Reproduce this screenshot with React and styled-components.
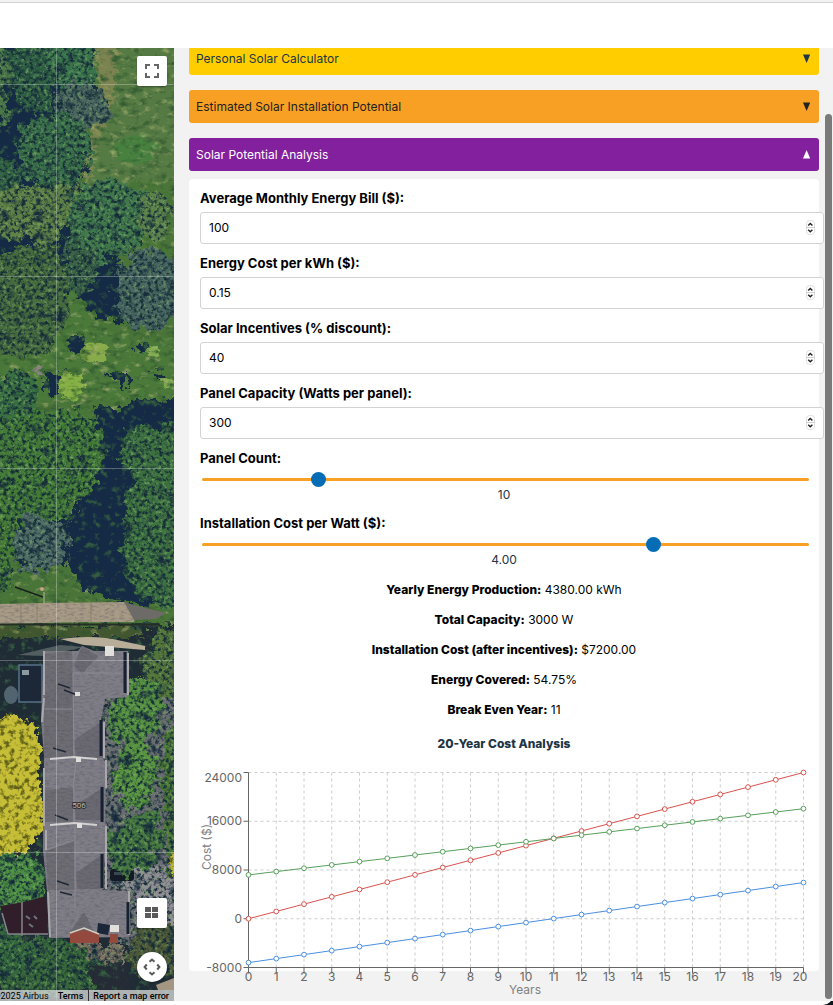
import React, { useState } from "react";
import styled, { createGlobalStyle } from "styled-components";

const GlobalStyle = createGlobalStyle`
  * { box-sizing: border-box; }
  html, body, #root { height: 100%; }
  body {
    margin: 0;
    overflow: hidden;
    background: #0b1418;
    color: #213547;
    font-family: Inter, "Liberation Sans", sans-serif;
    font-size: 12px;
    line-height: 18px;
  }
`;

const Page = styled.div`
  display: flex;
  flex-direction: column;
  height: 100%;
  padding-bottom: 4px;
  border-bottom-right-radius: 10px;
  background: #ffffff;
`;

const TopBar = styled.header`
  flex: 0 0 48px;
  background: #ffffff;
  border-top: 2px solid #f2f2f2;
  box-shadow: inset 0 1px 0 #d2d2d2;
`;

const Main = styled.main`
  position: relative;
  flex: 1;
  min-height: 0;
  display: grid;
  grid-template-columns: 174px minmax(0, 1fr);
`;

const MapPane = styled.section`
  position: relative;
  overflow: hidden;
  background: #3c6638;
`;

const Aerial = styled.svg`
  display: block;
  width: 100%;
  height: 100%;
`;

const MapControls = styled.div`
  position: absolute;
  inset: 8px 7px 19px auto;
  display: flex;
  flex-direction: column;
  justify-content: space-between;
`;

const ControlGroup = styled.div`
  display: flex;
  flex-direction: column;
  gap: 24px;
`;

const MapButton = styled.button`
  display: grid;
  place-items: center;
  width: 30px;
  height: 30px;
  padding: 0;
  border: 0;
  border-radius: ${(p) => (p.$round ? "50%" : "2px")};
  background: #ffffff;
  box-shadow: 0 1px 2px rgba(0, 0, 0, 0.3);
`;

const Attribution = styled.footer`
  position: absolute;
  right: 0;
  bottom: 0;
  display: flex;
  height: 11px;
  background: rgba(228, 230, 228, 0.72);
  font-family: Roboto, "Liberation Sans", sans-serif;
  font-size: 9px;
  line-height: 12px;
  white-space: nowrap;
  color: #000000;
`;

const Credit = styled.span`
  padding: 0 5px 0 4px;
`;

const CreditLink = styled.a`
  padding: 0 5px 0 4px;
  color: #000000;
  font-weight: 500;
  text-decoration: none;
  border-left: ${(p) => (p.$divided ? "1px solid #333333" : "0")};
`;

const Panel = styled.section`
  overflow: hidden;
  padding: 0 14px 0 15px;
  background: #f2f2f2;
`;

const Stack = styled.div`
  display: flex;
  flex-direction: column;
  gap: 15px;
  margin-top: -6px;
`;

const Section = styled.div`
  display: flex;
  flex-direction: column;
  gap: 8px;
`;

const SectionHeader = styled.button`
  display: flex;
  align-items: center;
  justify-content: space-between;
  height: 33px;
  padding: 0 9px 0 7px;
  border: 0;
  border-radius: 3px;
  background: ${(p) => p.$bg};
  color: ${(p) => p.$fg};
  font: inherit;
`;

const Card = styled.div`
  padding: 11px;
  border-radius: 4px;
  background: #ffffff;
`;

const Field = styled.div`
  display: flex;
  flex-direction: column;
  min-height: 54px;
  margin-bottom: 11px;
`;

const FieldLabel = styled.label`
  margin-bottom: 5px;
  font-size: 13px;
  line-height: 17px;
  font-weight: 700;
  color: #000000;
`;

const NumberBox = styled.div`
  position: relative;
  width: calc(100% + 16px);
`;

const NumberInput = styled.input`
  display: block;
  width: 100%;
  height: 32px;
  padding: 0 24px 2px 8px;
  border: 1px solid #d3d3d3;
  border-radius: 3px;
  outline: none;
  background: #ffffff;
  color: #000000;
  font: inherit;
  appearance: textfield;
  &::-webkit-inner-spin-button,
  &::-webkit-outer-spin-button {
    appearance: none;
    margin: 0;
  }
`;

const Stepper = styled.svg`
  position: absolute;
  top: 8px;
  right: 9px;
  pointer-events: none;
`;

const Slider = styled.input`
  appearance: none;
  height: 15px;
  margin: 0 0 0 2px;
  background: transparent;
  width: calc(100% - 1px);
  &::-webkit-slider-runnable-track {
    height: 3px;
    border-radius: 2px;
    background: #f8a023;
  }
  &::-webkit-slider-thumb {
    appearance: none;
    width: 15px;
    height: 15px;
    margin-top: -6px;
    border: 0;
    border-radius: 50%;
    background: #056db6;
  }
`;

const SliderValue = styled.output`
  line-height: 15px;
  text-align: center;
`;

const Results = styled.div`
  display: flex;
  flex-direction: column;
  align-items: center;
  gap: 12px;
  padding-top: 1px;
  color: #000000;
`;

const Result = styled.p`
  margin: 0;
  b { font-weight: 800; }
`;

const ChartTitle = styled.h3`
  margin: 16px 0 14px;
  font-size: 12px;
  font-weight: 800;
  line-height: 18px;
  text-align: center;
`;

const ChartFrame = styled.div`
  height: 193px;
`;

const ChartSvg = styled.svg`
  display: block;
  width: 100%;
  overflow: visible;
`;

const ScrollThumb = styled.div`
  position: absolute;
  top: 66px;
  right: 1px;
  bottom: 2px;
  width: 7px;
  border-radius: 4px;
  background: #7a7a7a;
`;

function Arrow({ open }) {
  return (
    <svg width="7" height="9" viewBox="0 0 7 9" fill="currentColor" aria-hidden="true">
      <path d={open ? "M0 8.5H7.2L3.6 0Z" : "M0 .5H7.2L3.6 9Z"} />
    </svg>
  );
}

function NumberField({ id, label, value, step }) {
  const [current, setCurrent] = useState(value);
  return (
    <Field>
      <FieldLabel htmlFor={id}>{label}</FieldLabel>
      <NumberBox>
        <NumberInput
          id={id}
          type="number"
          step={step}
          value={current}
          onChange={(e) => setCurrent(e.target.value)}
        />
        <Stepper width="9" height="15" viewBox="0 0 9 15" aria-hidden="true">
          <rect x=".5" y=".5" width="8" height="14" rx="3" fill="#fff" stroke="#dedede" />
          <path d="M0 7.5h9" stroke="#cfcfcf" />
          <path d="M2.2 5.4l2.1-2 2.1 2M2.2 9.8l2.1 2 2.1-2" fill="none" stroke="#222" strokeWidth="1.4" />
        </Stepper>
      </NumberBox>
    </Field>
  );
}

function RangeField({ id, label, value, min, max, step, digits }) {
  const [current, setCurrent] = useState(value);
  return (
    <Field>
      <FieldLabel htmlFor={id}>{label}</FieldLabel>
      <Slider
        id={id}
        type="range"
        min={min}
        max={max}
        step={step}
        value={current}
        onChange={(e) => setCurrent(Number(e.target.value))}
      />
      <SliderValue htmlFor={id}>{current.toFixed(digits)}</SliderValue>
    </Field>
  );
}

const YEARS = Array.from({ length: 21 }, (_, i) => i);
const TICKS = [24000, 16000, 8000, 0, -8000];
const SERIES = [
  { color: "#d9534f", at: (y) => 1200 * y },
  { color: "#4a8fe0", at: (y) => -7200 + 657 * y },
  { color: "#57a05b", at: (y) => 7200 + 543 * y },
];
const xOf = (year) => 48.5 + year * 27.75;
const yOf = (cost) => 5.5 + ((24000 - cost) / 32000) * 195;

function CostChart() {
  return (
    <ChartSvg viewBox="0 0 608 234" role="img" aria-label="20-year cost analysis">
      <g stroke="#cccccc" strokeDasharray="3 3">
        {TICKS.map((t) => (
          <line key={t} x1={xOf(0)} x2={xOf(20)} y1={yOf(t)} y2={yOf(t)} />
        ))}
        {YEARS.map((y) => (
          <line key={y} x1={xOf(y)} x2={xOf(y)} y1="5.5" y2="200.5" />
        ))}
      </g>
      <path d="M48.5 5.5V200.5H603.5" fill="none" stroke="#666666" />
      <g fill="#666666" fontSize="12">
        {TICKS.map((t) => (
          <React.Fragment key={t}>
            <path d={`M43.5 ${yOf(t)}h5`} stroke="#666666" />
            <text x="42" y={t === 24000 ? 15 : yOf(t) + 4} textAnchor="end">{t}</text>
          </React.Fragment>
        ))}
        {YEARS.map((y) => (
          <React.Fragment key={y}>
            <path d={`M${xOf(y)} 200.5v6`} stroke="#666666" />
            <text x={y === 20 ? 600 : xOf(y)} y="214" textAnchor="middle">{y}</text>
          </React.Fragment>
        ))}
      </g>
      <g fill="#808080" fontSize="12" textAnchor="middle">
        <text x="325" y="227">Years</text>
        <text transform="translate(11 80) rotate(-90)">Cost ($)</text>
      </g>
      {SERIES.map((s) => (
        <g key={s.color} stroke={s.color} fill="none">
          <polyline points={YEARS.map((y) => `${xOf(y)},${yOf(s.at(y))}`).join(" ")} />
          {YEARS.map((y) => (
            <circle key={y} cx={xOf(y)} cy={yOf(s.at(y))} r="2.4" fill="#ffffff" />
          ))}
        </g>
      ))}
    </ChartSvg>
  );
}

function AerialMap() {
  return (
    <Aerial viewBox="0 48 174 953" preserveAspectRatio="xMidYMid slice" role="img" aria-label="Satellite map">
      <defs>
        <filter id="foliage" x="-10%" y="-10%" width="120%" height="120%" colorInterpolationFilters="sRGB">
          <feTurbulence type="fractalNoise" baseFrequency=".27" numOctaves="3" seed="7" result="fine" />
          <feTurbulence type="fractalNoise" baseFrequency=".09" numOctaves="4" seed="21" result="broad" />
          <feDisplacementMap in="SourceGraphic" in2="broad" scale="24" xChannelSelector="R" yChannelSelector="G" result="d" />
          <feColorMatrix in="fine" values="0 0 0 0 .08  0 0 0 0 .17  0 0 0 0 .22  3.6 0 0 0 -1.65" result="k" />
          <feComposite in="k" in2="d" operator="in" result="dark" />
          <feColorMatrix in="broad" values="0 0 0 0 .08  0 0 0 0 .16  0 0 0 0 .24  0 0 4 0 -2.3" result="k2" />
          <feComposite in="k2" in2="d" operator="in" result="deep" />
          <feColorMatrix in="fine" values="0 0 0 0 .5  0 0 0 0 .68  0 0 0 0 .4  0 2.2 0 0 -1.15" result="w" />
          <feComposite in="w" in2="d" operator="in" result="light" />
          <feMerge result="all">
            <feMergeNode in="d" /><feMergeNode in="deep" /><feMergeNode in="light" /><feMergeNode in="dark" />
          </feMerge>
          <feGaussianBlur in="all" stdDeviation=".5" />
        </filter>
        <filter id="ground" x="-5%" y="-5%" width="110%" height="110%" colorInterpolationFilters="sRGB">
          <feTurbulence type="fractalNoise" baseFrequency=".1 .16" numOctaves="4" seed="12" result="n" />
          <feDisplacementMap in="SourceGraphic" in2="n" scale="16" xChannelSelector="R" yChannelSelector="G" result="d" />
          <feColorMatrix in="n" values="0 0 0 0 .66  0 0 0 0 .7  0 0 0 0 .45  0 2.4 0 0 -1.35" result="w" />
          <feComposite in="w" in2="d" operator="in" result="light" />
          <feColorMatrix in="n" values="0 0 0 0 .17  0 0 0 0 .33  0 0 0 0 .18  2.4 0 0 0 -1.2" result="k" />
          <feComposite in="k" in2="d" operator="in" result="dark" />
          <feMerge result="all"><feMergeNode in="d" /><feMergeNode in="dark" /><feMergeNode in="light" /></feMerge>
          <feGaussianBlur in="all" stdDeviation=".4" />
        </filter>
        <filter id="blossom" x="-10%" y="-10%" width="120%" height="120%" colorInterpolationFilters="sRGB">
          <feTurbulence type="fractalNoise" baseFrequency=".2" numOctaves="3" seed="9" result="n" />
          <feDisplacementMap in="SourceGraphic" in2="n" scale="14" xChannelSelector="R" yChannelSelector="G" result="d" />
          <feColorMatrix in="n" values="0 0 0 0 .38  0 0 0 0 .38  0 0 0 0 .1  4 0 0 0 -1.9" result="k" />
          <feComposite in="k" in2="d" operator="in" result="dark" />
          <feMerge result="all"><feMergeNode in="d" /><feMergeNode in="dark" /></feMerge>
          <feGaussianBlur in="all" stdDeviation=".5" />
        </filter>
        <filter id="shade" x="-10%" y="-10%" width="120%" height="120%" colorInterpolationFilters="sRGB">
          <feTurbulence type="fractalNoise" baseFrequency=".14" numOctaves="4" seed="3" result="n" />
          <feDisplacementMap in="SourceGraphic" in2="n" scale="20" xChannelSelector="R" yChannelSelector="G" result="d" />
          <feColorMatrix in="n" values="0 0 0 0 .2  0 0 0 0 .36  0 0 0 0 .25  0 4 0 0 -2.2" result="w" />
          <feComposite in="w" in2="d" operator="in" result="light" />
          <feMerge result="all"><feMergeNode in="d" /><feMergeNode in="light" /></feMerge>
          <feGaussianBlur in="all" stdDeviation=".6" />
        </filter>
        <filter id="shingle" x="0" y="0" width="100%" height="100%" colorInterpolationFilters="sRGB">
          <feTurbulence type="fractalNoise" baseFrequency=".2 .5" numOctaves="3" seed="5" result="n" />
          <feColorMatrix in="n" values="0 0 0 0 .3  0 0 0 0 .3  0 0 0 0 .36  .9 0 0 0 -.38" result="k" />
          <feComposite in="k" in2="SourceGraphic" operator="in" result="dark" />
          <feMerge><feMergeNode in="SourceGraphic" /><feMergeNode in="dark" /></feMerge>
        </filter>
      </defs>

      <g filter="url(#ground)">
        <rect x="-20" y="30" width="220" height="1000" fill="#4a7539" />
        <path d="M92 30H200V180H130L85 230 82 160 98 120 108 95Z" fill="#557a43" />
        <path d="M94 40L118 40 112 100 95 150 85 190 82 170 90 130 100 110Z" fill="#7b8350" />
        <ellipse cx="135" cy="150" rx="22" ry="14" fill="#47803f" />
        <path d="M0 250H70L90 320 130 340H174V400H0Z" fill="#4b793a" />
      </g>

      <g filter="url(#shade)" fill="#152a44">
        <path d="M-10 40H90L94 80 80 130 86 170 60 205 -10 210Z" />
        <path d="M-10 190L60 180 70 240 20 262 -10 262Z" />
        <path d="M50 225L84 215 120 262 128 325 100 318 70 290Z" />
        <path d="M68 336L84 338 84 355 66 350ZM137 344L151 346 149 355 136 351ZM44 372L64 372 64 397 44 390ZM108 374L129 374 126 391ZM149 372L166 373 164 382Z" />
        <path d="M95 404L118 410 130 400 190 400 190 604 135 606 82 590 62 550 80 490 102 460Z" />
        <path d="M12 490L70 520 64 566 20 566Z" />
        <path d="M-10 625H190V1010H-10Z" fill="#202c35" />
      </g>

      <g filter="url(#foliage)">
        <path d="M-20 40H4L14 62 6 100 12 120 -20 125Z" fill="#4a7648" />
        <path d="M6 46L44 40 58 70 50 110 20 112 12 80Z" fill="#2f6043" />
        <path d="M44 36H96L97 72 86 90 60 88 50 64Z" fill="#3a754b" />
        <ellipse cx="81" cy="107" rx="28" ry="24" fill="#4c6860" />
        <ellipse cx="54" cy="150" rx="38" ry="38" fill="#3a7049" />
        <ellipse cx="2" cy="182" rx="17" ry="26" fill="#336444" />
        <path d="M-20 196L60 180 86 182 82 205 58 237 44 247 24 240 -20 238Z" fill="#5f8145" />
        <path d="M84 182L110 178 140 192 144 235 134 252 110 256 100 266 76 256 66 222Z" fill="#40774b" />
        <ellipse cx="155" cy="213" rx="17" ry="24" fill="#5c824a" />
        <path d="M62 236L96 252 92 288 70 292Z" fill="#3a6246" />
        <ellipse cx="148" cy="290" rx="34" ry="40" fill="#4a6862" />
        <path d="M-20 252L50 244 68 270 70 310 48 354 -20 356Z" fill="#466b3d" />
        <ellipse cx="12" cy="402" rx="28" ry="31" fill="#3a7141" />
        <path d="M-20 430L30 412 74 408 100 424 104 466 84 494 66 518 22 522 -20 502Z" fill="#437b36" />
        <path d="M125 430L158 426 195 408 195 610 162 608 140 596 124 562 126 500 134 480 120 450Z" fill="#3d713f" />
        <ellipse cx="39" cy="544" rx="28" ry="27" fill="#506c66" />
        <path d="M-20 492L12 498 15 540 12 587 -20 594Z" fill="#457a34" />
      </g>
      <g filter="url(#ground)">
        <ellipse cx="94" cy="352" rx="12" ry="11" fill="#87ab49" />
        <ellipse cx="71" cy="386" rx="13" ry="13" fill="#86b144" />
        <ellipse cx="153" cy="352" rx="7" ry="6" fill="#84ad53" />
        <ellipse cx="167" cy="383" rx="7" ry="4" fill="#84ad53" />
        <ellipse cx="39" cy="371" rx="6" ry="5" fill="#87867d" />
        <path d="M-20 626H140V638H-20Z" fill="#42562f" />
      </g>
      <path d="M0 604L45 603 124 602 136 614 134 622 80 622 0 624Z" fill="#a99c86" filter="url(#shingle)" />
      <path d="M124 602L142 607 166 613 156 619 134 620Z" fill="#6c6b67" />
      <path d="M21 604V623M37 604V623M91 603V622" stroke="#8b7e6b" />
      <path d="M0 624.5H160" stroke="#252e26" strokeWidth="2" />
      <path d="M15 587L43 597" stroke="#17201b" strokeWidth="1.4" />
      <circle cx="42" cy="589" r="2" fill="#c5a58b" />
      <path d="M44 592V604" stroke="#bbb5a5" />
      <path d="M60 639Q95 634 122 641L145 646V650L84 645Z" fill="#b8ad98" />
      <path d="M18 655L60 645 84 647 44 656Z" fill="#535e61" />
      <rect x="19" y="665" width="23" height="37" fill="#1c2838" stroke="#557188" strokeWidth="1.5" />
      <ellipse cx="11" cy="695" rx="7" ry="9" fill="#52646f" />
      <rect x="22" y="670" width="7" height="5" fill="#8b9aa1" />

      <g filter="url(#foliage)">
        <path d="M100 690H195V945H120V892H100Z" fill="#6a6b72" />
        <path d="M118 860L195 870V925H138L134 892 112 888Z" fill="#918e95" />
      </g>
      <rect x="110" y="869" width="24" height="12" rx="3" fill="#151b26" />
      <path d="M114 872H130V875H114Z" fill="#3b4653" />

      <g filter="url(#foliage)">
        <path d="M145 650L155 634 166 630 190 645 190 700 150 690 136 664Z" fill="#54753a" />
        <path d="M134 680L160 680 162 712 150 742 128 746 106 728 108 702Z" fill="#559040" />
        <path d="M118 750L142 742 158 762 154 794 132 808 112 796Z" fill="#58943f" />
        <path d="M130 816L158 812 164 845 146 870 120 874 104 856 110 832Z" fill="#467840" />
        <path d="M164 728L195 720V880L170 878 162 780Z" fill="#4a7535" />
        <ellipse cx="48" cy="967" rx="57" ry="30" fill="#376639" />
        <ellipse cx="6" cy="950" rx="26" ry="27" fill="#35673c" />
        <path d="M140 928L195 920V970L142 978 124 954Z" fill="#4f5a38" />
        <ellipse cx="14" cy="882" rx="32" ry="32" fill="#4b8e43" />
      </g>
      <g filter="url(#blossom)">
        <path d="M-20 724L14 714 34 726 42 750 38 778 44 804 42 832 24 852 -20 854Z" fill="#c6be36" />
        <ellipse cx="175" cy="864" rx="5" ry="12" fill="#bdb833" />
      </g>
      <path d="M70 942H115L130 955 126 970 92 962Z" fill="#7d7263" filter="url(#foliage)" />
      <path d="M86 966L124 962 132 990H96Z" fill="#252c36" filter="url(#shade)" />
      <path d="M0 906L24 902 46 896 48 934 8 934Z" fill="#301f2b" />
      <path d="M2 913L8 934H48M22 902V936" stroke="#85848b" strokeWidth="1.5" fill="none" />
      <path d="M26 916l4 3m4-3l3 3m-8 5l4 3" stroke="#6d7480" strokeWidth="2" />

      <g filter="url(#shingle)">
        <path d="M44 651L78 651 82 646 94 651 128 651 128 697 105 699 101 720 102 758 106 762 105 858 102 890 128 891 129 937 49 938 47 891 43 850 44 756 41 720Z" fill="#7f7d86" />
        <path d="M44 654L72 651 73 686 73 758 44 758ZM45 790L73 787V822H45ZM46 851L74 841 75 890 48 890Z" fill="#6e6d74" />
        <path d="M82 646L74 665 82 674 98 656ZM72 672L45 696V708L72 707ZM74 740L104 720V758H76ZM74 806L104 787V820H76ZM76 873L104 853V889H77ZM84 912L94 932 70 932Z" fill="#6b6a72" />
      </g>
      <path d="M73 673H122M73 673L74 757M76 762L73 788M74 788V822M75 826V909M45 709H72M45 774H72M46 850L74 840" stroke="#8c8a91" fill="none" />
      <path d="M44 651V695M44 698L42 722M44 768V826M46 830V850M48 892L50 937M128 653V695M104 722V758M106 760V788M106 826V889M129 891V935" stroke="#aaa8ad" strokeWidth="2" fill="none" />
      <path d="M125 652V693M101 720V756M102 787V822M102 854V888M128 902V934" stroke="#182131" strokeWidth="3" />
      <path d="M50 759L74 757 97 759M50 825L75 823 97 825" stroke="#d2d0d0" strokeWidth="2" fill="none" />
      <path d="M58 684L70 688M64 690L77 695M53 748L66 752M55 815L68 820M57 881L69 885M60 892L72 895" stroke="#202735" strokeWidth="1.5" />
      <g fill="#e1dfdc">
        <rect x="75" y="692" width="5" height="4" />
        <rect x="76" y="757" width="5" height="5" />
        <rect x="77" y="823" width="5" height="5" />
        <rect x="105" y="646" width="9" height="10" />
        <rect x="110" y="925" width="9" height="7" />
      </g>
      <path d="M98 923L110 925 108 935 97 933Z" fill="#1b2638" />
      <path d="M70 933L84 930 99 934V943H70ZM110 934H118V943H110Z" fill="#94493f" />
      <path d="M70 933L84 928 99 934" stroke="#d5ccbd" strokeWidth="1.5" fill="none" />
      <path d="M156 985L174 978V990H158Z" fill="#a59682" />

      <path d="M56.5 48V1001M0 84.5H174M0 276.5H174M0 468.5H174M0 660.5H174M0 852.5H174" stroke="#ffffff" strokeOpacity=".27" />
      <text
        x="79" y="808" textAnchor="middle" fontFamily="Roboto, sans-serif" fontSize="8"
        fill="#b8b8b8" stroke="#333333" strokeWidth="2" paintOrder="stroke"
      >506</text>
    </Aerial>
  );
}

export default function App() {
  return (
    <>
      <GlobalStyle />
      <Page>
        <TopBar />
        <Main>
          <MapPane>
            <AerialMap />
            <MapControls>
              <MapButton type="button" aria-label="Toggle fullscreen">
                <svg width="14" height="14" viewBox="0 0 14 14" fill="none" stroke="#666666" strokeWidth="2">
                  <path d="M1 5V1H5M9 1H13V5M13 9V13H9M5 13H1V9" />
                </svg>
              </MapButton>
              <ControlGroup>
                <MapButton type="button" aria-label="Map type">
                  <svg width="14" height="12" viewBox="0 0 14 12" fill="#5a5a5a">
                    <path d="M0 0H6V5H0ZM7 0H13V5H7ZM0 6H6V11H0ZM7 6H13V11H7Z" />
                  </svg>
                </MapButton>
                <MapButton type="button" $round aria-label="Camera controls">
                  <svg width="18" height="18" viewBox="0 0 18 18" fill="none" stroke="#5a5a5a" strokeWidth="2">
                    <path d="M6.5 3.8L9 1.6 11.5 3.8M14.2 6.5L16.4 9 14.2 11.5M11.5 14.2L9 16.4 6.5 14.2M3.8 11.5L1.6 9 3.8 6.5" />
                  </svg>
                </MapButton>
              </ControlGroup>
            </MapControls>
            <Attribution>
              <Credit>©2025 Airbus</Credit>
              <CreditLink href="#terms">Terms</CreditLink>
              <CreditLink href="#report" $divided>Report a map error</CreditLink>
            </Attribution>
          </MapPane>
          <Panel>
            <Stack>
              <SectionHeader type="button" $bg="#ffcd00" $fg="#213547">
                <span>Personal Solar Calculator</span><Arrow />
              </SectionHeader>
              <SectionHeader type="button" $bg="#f8a023" $fg="#222222">
                <span>Estimated Solar Installation Potential</span><Arrow />
              </SectionHeader>
              <Section>
                <SectionHeader type="button" $bg="#83209d" $fg="#ffffff" aria-expanded="true">
                  <span>Solar Potential Analysis</span><Arrow open />
                </SectionHeader>
                <Card>
                  <NumberField id="bill" label="Average Monthly Energy Bill ($):" value="100" />
                  <NumberField id="rate" label="Energy Cost per kWh ($):" value="0.15" step="0.01" />
                  <NumberField id="incentives" label="Solar Incentives (% discount):" value="40" />
                  <NumberField id="capacity" label="Panel Capacity (Watts per panel):" value="300" />
                  <RangeField id="count" label="Panel Count:" value={10} min={1} max={50} step={1} digits={0} />
                  <RangeField id="install" label="Installation Cost per Watt ($):" value={4} min={1} max={5} step={0.1} digits={2} />
                  <Results>
                    <Result><b>Yearly Energy Production:</b> 4380.00 kWh</Result>
                    <Result><b>Total Capacity:</b> 3000 W</Result>
                    <Result><b>Installation Cost (after incentives):</b> $7200.00</Result>
                    <Result><b>Energy Covered:</b> 54.75%</Result>
                    <Result><b>Break Even Year:</b> 11</Result>
                  </Results>
                  <ChartTitle>20-Year Cost Analysis</ChartTitle>
                  <ChartFrame><CostChart /></ChartFrame>
                </Card>
              </Section>
            </Stack>
          </Panel>
          <ScrollThumb />
        </Main>
      </Page>
    </>
  );
}
